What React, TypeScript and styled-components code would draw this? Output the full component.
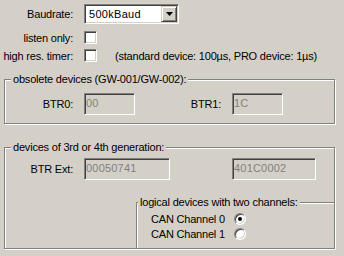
import React from 'react';
import styled, { createGlobalStyle } from 'styled-components';

const face = '#d4d0c8';
const shadow = '#808080';
const darkShadow = '#404040';

const GlobalStyle = createGlobalStyle`
  html, body {
    margin: 0;
    padding: 0;
    background: ${face};
  }
  body {
    font-family: "Liberation Sans", Arial, sans-serif;
    font-size: 11px;
    letter-spacing: -0.2px;
    color: #000;
  }
`;

const Dialog = styled.div`
  width: 344px;
  height: 256px;
  padding-top: 4px;
  box-sizing: border-box;
  overflow: hidden;
  background: ${face};
`;

const FieldRow = styled.div<{ $h: number; $mt?: number }>`
  display: flex;
  align-items: center;
  height: ${({ $h }) => $h}px;
  margin-top: ${({ $mt }) => $mt || 0}px;
`;

const Label = styled.span<{ $w: number }>`
  flex: none;
  width: ${({ $w }) => $w}px;
  padding-right: 11px;
  box-sizing: border-box;
  text-align: right;
  white-space: nowrap;
`;

const Sunken = styled.div`
  box-sizing: border-box;
  border: 1px solid;
  border-color: ${shadow} #fff #fff ${shadow};
  box-shadow: inset 1px 1px 0 ${darkShadow}, inset -1px -1px 0 ${face};
`;

const Combo = styled(Sunken)`
  display: flex;
  align-items: center;
  width: 95px;
  height: 20px;
  padding: 1px;
  background: #fff;
`;

const ComboText = styled.span`
  flex: 1;
  padding-left: 3px;
  letter-spacing: 0.3px;
`;

const DropButton = styled.div`
  display: flex;
  align-items: center;
  justify-content: center;
  width: 16px;
  height: 16px;
  box-sizing: border-box;
  border: 1px solid;
  border-color: ${face} ${darkShadow} ${darkShadow} ${face};
  box-shadow: inset 1px 1px 0 #fff, inset -1px -1px 0 ${shadow};
  background: ${face};
`;

const Check = styled(Sunken)`
  flex: none;
  width: 13px;
  height: 13px;
  background: #fff;
`;

const Hint = styled.span`
  margin-left: 18px;
  white-space: nowrap;
`;

const Group = styled.div<{ $mt: number; $ml: number; $w: number; $h: number }>`
  position: relative;
  box-sizing: border-box;
  margin-top: ${({ $mt }) => $mt}px;
  margin-left: ${({ $ml }) => $ml}px;
  width: ${({ $w }) => $w}px;
  height: ${({ $h }) => $h}px;
  border: 1px solid ${shadow};
  box-shadow: inset 1px 1px 0 #fff, 1px 1px 0 #fff;
`;

const GroupTitle = styled.span<{ $left: number }>`
  position: absolute;
  top: -8px;
  left: ${({ $left }) => $left}px;
  padding: 0 2px;
  line-height: 14px;
  background: ${face};
  white-space: nowrap;
`;

const Field = styled.input<{ $w: number }>`
  flex: none;
  width: ${({ $w }) => $w}px;
  height: 22px;
  margin: 0;
  padding: 0 0 3px 1px;
  box-sizing: border-box;
  border: 1px solid;
  border-color: ${shadow} #fff #fff ${shadow};
  box-shadow: inset 1px 1px 0 ${darkShadow}, inset -1px -1px 0 ${face};
  background: ${face};
  font: inherit;
  letter-spacing: 0.2px;
  color: ${shadow};
  -webkit-text-fill-color: ${shadow};
  outline: none;
`;

const RadioList = styled.div`
  padding-top: 8px;
`;

const RadioRow = styled.div`
  display: flex;
  align-items: center;
  height: 15px;
  padding-left: 14px;
`;

const RadioLabel = styled.span`
  width: 83px;
  white-space: nowrap;
`;

const Radio = styled.span<{ $checked?: boolean }>`
  position: relative;
  flex: none;
  width: 12px;
  height: 12px;
  box-sizing: border-box;
  border-radius: 50%;
  border: 1px solid;
  border-color: ${shadow} #fff #fff ${shadow};
  box-shadow: inset 1px 1px 0 ${darkShadow}, inset -1px -1px 0 ${face};
  background: #fff;

  &::after {
    content: '';
    display: ${({ $checked }) => ($checked ? 'block' : 'none')};
    position: absolute;
    left: 3px;
    top: 3px;
    width: 4px;
    height: 4px;
    border-radius: 50%;
    background: #000;
  }
`;

const DownArrow = () => (
  <svg width="7" height="4" viewBox="0 0 7 4">
    <polygon points="0,0 7,0 3.5,4" fill="#000" />
  </svg>
);

const App: React.FC = () => {
  return (
    <Dialog>
      <GlobalStyle />
      <FieldRow $h={20}>
        <Label $w={84}>Baudrate:</Label>
        <Combo>
          <ComboText>500kBaud</ComboText>
          <DropButton>
            <DownArrow />
          </DropButton>
        </Combo>
      </FieldRow>
      <FieldRow $h={13} $mt={7}>
        <Label $w={84}>listen only:</Label>
        <Check />
      </FieldRow>
      <FieldRow $h={13} $mt={5}>
        <Label $w={84}>high res. timer:</Label>
        <Check />
        <Hint>(standard device: 100µs, PRO device: 1µs)</Hint>
      </FieldRow>

      <Group $mt={17} $ml={4} $w={331} $h={45}>
        <GroupTitle $left={6}>obsolete devices (GW-001/GW-002):</GroupTitle>
        <FieldRow $h={22} $mt={13}>
          <Label $w={79}>BTR0:</Label>
          <Field $w={51} disabled defaultValue="00" />
          <Label $w={97}>BTR1:</Label>
          <Field $w={51} disabled defaultValue="1C" />
        </FieldRow>
      </Group>

      <Group $mt={23} $ml={4} $w={331} $h={102}>
        <GroupTitle $left={6}>devices of 3rd or 4th generation:</GroupTitle>
        <FieldRow $h={22} $mt={10}>
          <Label $w={79}>BTR Ext:</Label>
          <Field $w={86} disabled defaultValue="00050741" />
          <Label $w={62} />
          <Field $w={84} disabled defaultValue="401C0002" />
        </FieldRow>
        <Group $mt={22} $ml={131} $w={199} $h={47}>
          <GroupTitle $left={1}>logical devices with two channels:</GroupTitle>
          <RadioList>
            <RadioRow>
              <RadioLabel>CAN Channel 0</RadioLabel>
              <Radio $checked />
            </RadioRow>
            <RadioRow>
              <RadioLabel>CAN Channel 1</RadioLabel>
              <Radio />
            </RadioRow>
          </RadioList>
        </Group>
      </Group>
    </Dialog>
  );
};

export default App;
